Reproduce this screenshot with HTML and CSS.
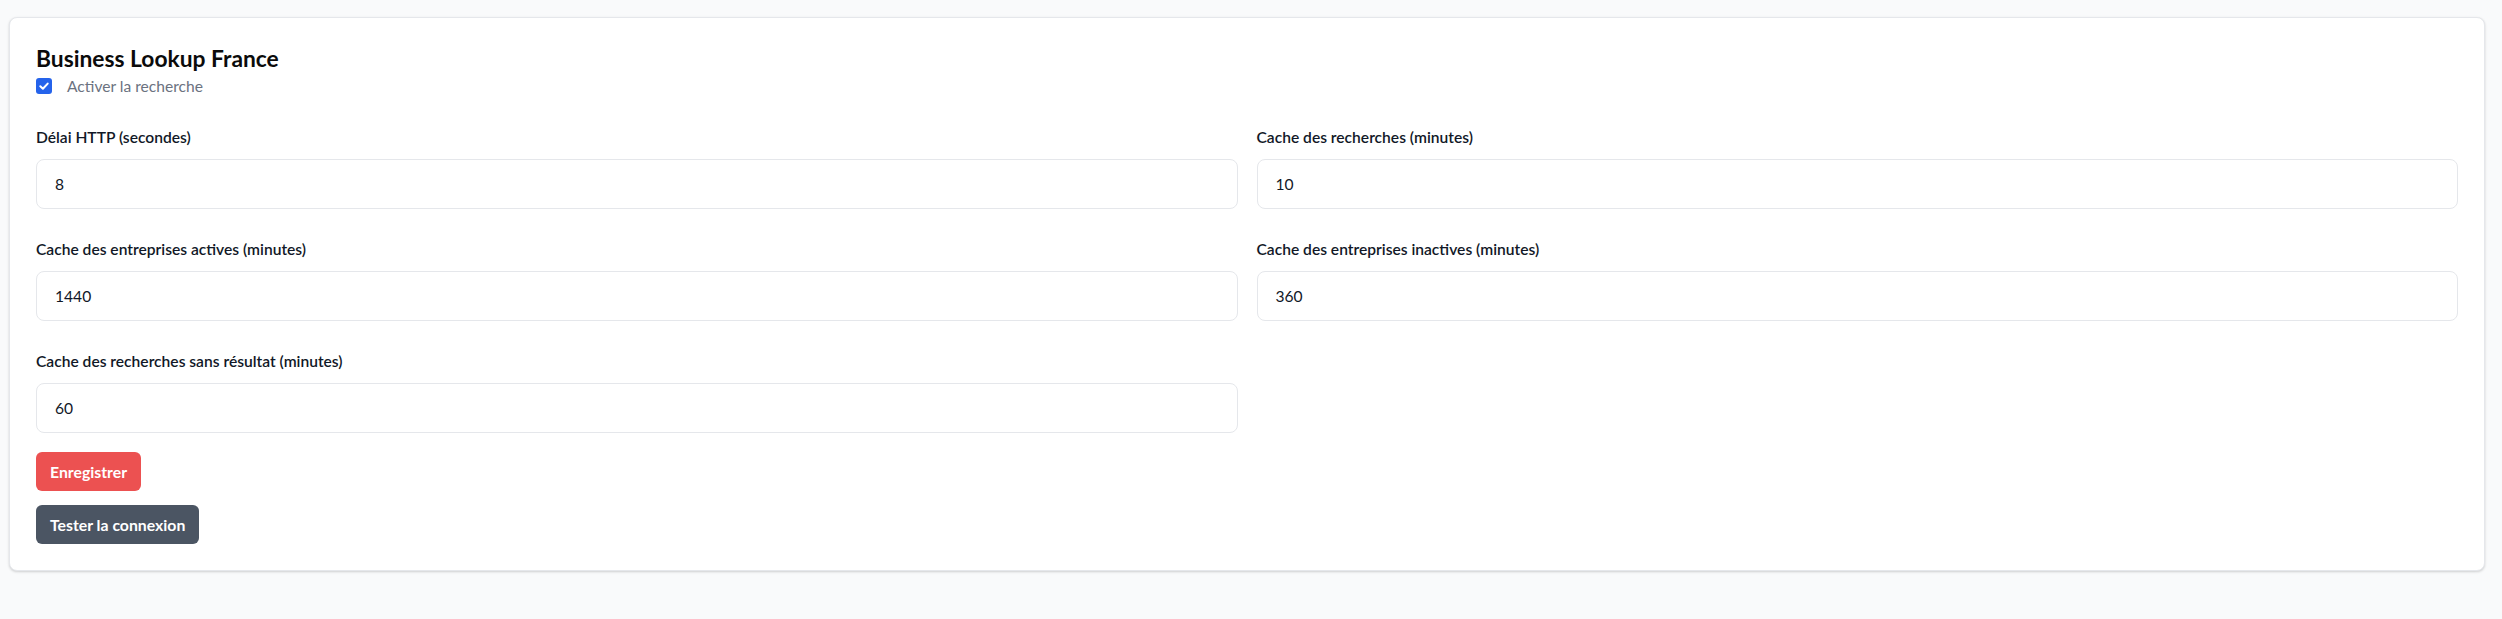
FILE: index.html
```html
<!DOCTYPE html>
<html lang="fr">
<head>
<meta charset="utf-8">
<title>Business Lookup France</title>
<link rel="stylesheet" href="styles.css">
</head>
<body>
<main class="page">
  <section class="card">
    <h2 class="card-title">Business Lookup France</h2>
    <label class="toggle">
      <span class="checkbox" aria-hidden="true">
        <svg viewBox="0 0 16 16" width="16" height="16"><path d="M4.3 8.3 L6.9 10.8 L11.7 5.6" fill="none" stroke="#fff" stroke-width="2" stroke-linecap="round" stroke-linejoin="round"/></svg>
      </span>
      <span class="toggle-text">Activer la recherche</span>
    </label>

    <div class="fields">
      <div class="field">
        <label class="field-label">Délai HTTP (secondes)</label>
        <div class="input">8</div>
      </div>
      <div class="field">
        <label class="field-label">Cache des recherches (minutes)</label>
        <div class="input">10</div>
      </div>
      <div class="field">
        <label class="field-label">Cache des entreprises actives (minutes)</label>
        <div class="input">1440</div>
      </div>
      <div class="field">
        <label class="field-label">Cache des entreprises inactives (minutes)</label>
        <div class="input">360</div>
      </div>
      <div class="field">
        <label class="field-label">Cache des recherches sans résultat (minutes)</label>
        <div class="input">60</div>
      </div>
    </div>

    <div class="actions">
      <button class="btn btn-primary" type="button">Enregistrer</button>
      <button class="btn btn-secondary" type="button">Tester la connexion</button>
    </div>
  </section>
</main>
</body>
</html>
```

FILE: styles.css
```css
* { box-sizing: border-box; }

html, body {
  margin: 0;
  padding: 0;
  background: #f9fafb;
  font-family: Lato, "Noto Sans", sans-serif;
  color: #111827;
}

.page {
  padding: 17px 17px 17px 9px;
}

.card {
  background: #ffffff;
  border: 1px solid #e5e7eb;
  border-radius: 8px;
  box-shadow: 0 1px 3px rgba(0, 0, 0, 0.12), 0 1px 2px rgba(0, 0, 0, 0.06);
  padding: 26px;
}

.card-title {
  margin: 0;
  font-size: 22.8px;
  line-height: 28px;
  font-weight: 700;
  color: #0b0b0b;
}

.toggle {
  margin-top: 4px;
  display: flex;
  align-items: center;
  gap: 15px;
  height: 20px;
}

.checkbox {
  width: 16px;
  height: 16px;
  border-radius: 3px;
  background: #2563eb;
  display: flex;
}

.toggle-text {
  font-size: 15.6px;
  line-height: 20px;
  color: #6b7280;
}

.fields {
  margin-top: 31px;
  display: grid;
  grid-template-columns: 1fr 1fr;
  column-gap: 19px;
  row-gap: 30px;
}

.field {
  display: flex;
  flex-direction: column;
}

.field-label {
  font-size: 15.6px;
  line-height: 20px;
  font-weight: 600;
  color: #111827;
  margin-bottom: 12px;
}

.input {
  height: 50px;
  border: 1px solid #e5e7eb;
  border-radius: 8px;
  padding: 0 18px;
  display: flex;
  align-items: center;
  font-size: 15.6px;
  color: #111827;
  background: #fff;
}

.actions {
  margin-top: 19px;
  display: flex;
  flex-direction: column;
  align-items: flex-start;
  gap: 14px;
}

.btn {
  height: 39px;
  border: none;
  border-radius: 6px;
  padding: 0 14px;
  font-family: Lato, "Noto Sans", sans-serif;
  font-size: 15.8px;
  font-weight: 700;
  color: #ffffff;
  cursor: pointer;
}

.btn-primary { background: #ec5151; }
.btn-secondary { background: #4b5563; }
```
